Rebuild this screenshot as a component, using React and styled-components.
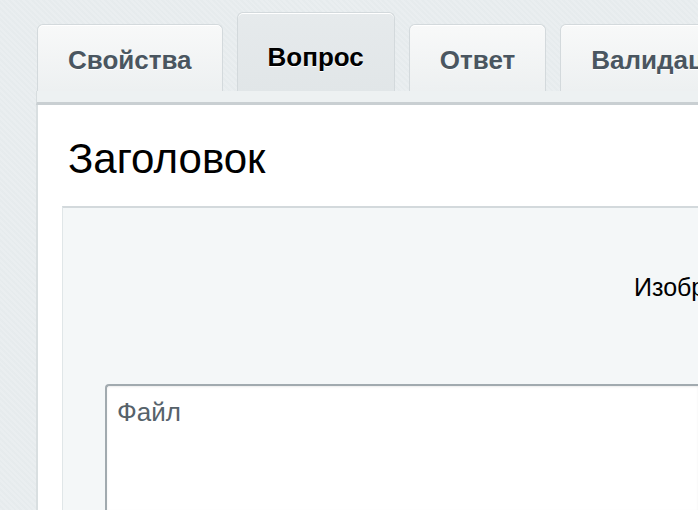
import styled, { createGlobalStyle } from "styled-components";

const GlobalStyle = createGlobalStyle`
  html, body {
    margin: 0;
    padding: 0;
    height: 100%;
    overflow: hidden;
    background: #e7ecee;
    font-family: "Liberation Sans", Arial, sans-serif;
  }
`;

const tabs = [
  { label: "Свойства" },
  { label: "Вопрос", active: true },
  { label: "Ответ" },
  { label: "Валидация" },
];

function App() {
  return (
    <Page>
      <GlobalStyle />
      <TabBar>
        {tabs.map((t) => (
          <Tab key={t.label} $active={t.active}>
            {t.label}
          </Tab>
        ))}
      </TabBar>
      <Strip />
      <Panel>
        <Title>Заголовок</Title>
        <Preview>
          <ImageLabel>Изображение</ImageLabel>
          <FileBox>
            <FileLabel>Файл</FileLabel>
          </FileBox>
        </Preview>
      </Panel>
    </Page>
  );
}

const Page = styled.div`
  width: 698px;
  height: 510px;
  overflow: hidden;
  padding-left: 36px;
  box-sizing: border-box;
  background:
    repeating-linear-gradient(
      45deg,
      rgba(255, 255, 255, 0.08) 0 2px,
      rgba(0, 0, 0, 0.006) 2px 4px
    ),
    #e8edef;
  display: flex;
  flex-direction: column;
`;

const TabBar = styled.div`
  display: flex;
  align-items: flex-end;
  gap: 14px;
  height: 91px;
  padding-left: 1px;
  white-space: nowrap;
`;

const Tab = styled.div`
  flex-shrink: 0;
  box-sizing: border-box;
  height: ${(p) => (p.$active ? "79px" : "67px")};
  padding: 0 30px;
  padding-bottom: ${(p) => (p.$active ? "21px" : "18px")};
  display: flex;
  align-items: flex-end;
  line-height: 26px;
  border: 1px solid #d3d9dc;
  border-bottom: none;
  border-radius: 6px 6px 0 0;
  background: ${(p) =>
    p.$active
      ? "linear-gradient(#e6eaec, #e1e6e8)"
      : "linear-gradient(#f8f9f9, #edf0f1)"};
  box-shadow: inset 0 1px 0 #ffffff;
  font-size: 26px;
  font-weight: bold;
  color: ${(p) => (p.$active ? "#000000" : "#4a5660")};
  text-shadow: 0 1px 0 #ffffff;
`;

const Strip = styled.div`
  height: 11px;
  background: #edf1f2;
  border-bottom: 3px solid #c9cfd2;
  border-left: 1px solid #d7dddf;
`;

const Panel = styled.div`
  flex: 1;
  background: #ffffff;
  border-left: 2px solid #d9dfe1;
  padding: 32px 0 0 24px;
  display: flex;
  flex-direction: column;
`;

const Title = styled.h1`
  margin: 0 0 25px 6px;
  font-size: 42px;
  font-weight: normal;
  color: #000000;
  line-height: 44px;
`;

const Preview = styled.div`
  flex: 1;
  background: #f4f7f8;
  border-top: 2px solid #d3d9dc;
  border-left: 1px solid #e0e6e8;
  padding: 0 0 0 42px;
  display: flex;
  flex-direction: column;
`;

const ImageLabel = styled.div`
  margin: 64px 0 0 529px;
  height: 112px;
  font-size: 25px;
  line-height: 30px;
  color: #000000;
  white-space: nowrap;
`;

const FileBox = styled.div`
  flex: 1;
  background: #ffffff;
  border: 2px solid #a1aaaf;
  border-right: none;
  border-bottom: none;
  border-radius: 4px 0 0 0;
  box-shadow: inset 0 1px 2px rgba(0, 0, 0, 0.08);
  padding: 11px 0 0 10px;
`;

const FileLabel = styled.div`
  font-size: 26px;
  line-height: 30px;
  color: #56626a;
`;

export default App;
